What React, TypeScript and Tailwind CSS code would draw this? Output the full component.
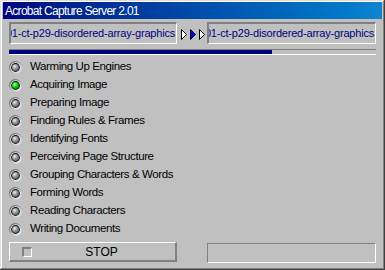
import React from 'react';

const steps = [
    'Warming Up Engines',
    'Acquiring Image',
    'Preparing Image',
    'Finding Rules & Frames',
    'Identifying Fonts',
    'Perceiving Page Structure',
    'Grouping Characters & Words',
    'Forming Words',
    'Reading Characters',
    'Writing Documents',
];

const Led: React.FC<{ on?: boolean; id: string }> = ({on, id}) => (
    <svg width="13" height="13" viewBox="0 0 13 13">
        <defs>
            <linearGradient id={`bezel-${id}`} x1="0" y1="0" x2="1" y2="1">
                <stop offset="0" stopColor="#4a4a4a"/>
                <stop offset="1" stopColor="#ffffff"/>
            </linearGradient>
            <radialGradient id={`ball-${id}`} cx="0.38" cy="0.35" r="0.7">
                {on ? (
                    <>
                        <stop offset="0" stopColor="#d0ffd0"/>
                        <stop offset="0.35" stopColor="#20f020"/>
                        <stop offset="1" stopColor="#008000"/>
                    </>
                ) : (
                    <>
                        <stop offset="0" stopColor="#f4f4f4"/>
                        <stop offset="0.4" stopColor="#a8a8a8"/>
                        <stop offset="1" stopColor="#585858"/>
                    </>
                )}
            </radialGradient>
        </defs>
        <circle cx="6.5" cy="6.5" r="6.5" fill={`url(#bezel-${id})`}/>
        <circle cx="6.5" cy="6.5" r="5.2" fill="#e8e8e8"/>
        <circle cx="6.5" cy="6.5" r="4.4" fill="#111111"/>
        <circle cx="6.5" cy="6.5" r="3.5" fill={`url(#ball-${id})`}/>
    </svg>
);

const Field: React.FC<{ text: string; className?: string }> = ({text, className}) => (
    <div
        className={"h-[22px] flex items-center justify-end overflow-hidden bg-[#c0c0c0] border-t-2 border-l-2 border-[#808080] border-b border-r border-b-white border-r-white pr-[1px] " + (className ?? '')}>
        <span className="whitespace-nowrap text-[11px] tracking-[-0.2px] text-[#000080]">{text}</span>
    </div>
);

export default function App() {
    return (
        <div
            className="w-[385px] h-[270px] bg-[#c0c0c0] px-[3px] pt-[2px] flex flex-col shadow-[inset_-1px_-1px_#404040,inset_1px_1px_#dfdfdf,inset_-2px_-2px_#808080,inset_2px_2px_#ffffff]"
            style={{fontFamily: '"Liberation Sans", Arial, sans-serif'}}>
            <div className="h-[17px] flex items-center pl-[2px] bg-linear-to-r from-[#000080] to-[#1084d0]">
                <span className="text-white text-[12px] tracking-[-0.7px]">Acrobat Capture Server 2.01</span>
            </div>

            <div className="px-[6px] flex flex-col">
                <div className="mt-[3px] flex">
                    <Field text="0001-ct-p29-disordered-array-graphics" className="w-[168px]"/>
                    <svg width="30" height="22" viewBox="0 0 30 22" className="shrink-0">
                        <path d="M4.5 7.5 L9.5 12.5 L4.5 17.5 Z" fill="#ffffff" stroke="#000" strokeWidth="1"/>
                        <path d="M13.5 7.5 L18.5 12.5 L13.5 17.5 Z" fill="#0000ff" stroke="#000" strokeWidth="1"/>
                        <path d="M22.5 7.5 L27.5 12.5 L22.5 17.5 Z" fill="#ffffff" stroke="#000" strokeWidth="1"/>
                    </svg>
                    <Field text="0001-ct-p29-disordered-array-graphics" className="flex-1"/>
                </div>

                <div className="mt-[5px] h-[6px] border-t border-[#808080] border-b border-b-white">
                    <div className="h-full w-[263px] bg-[#000080]"/>
                </div>

                <div className="mt-[3px] flex flex-col">
                    {steps.map((s, i) => (
                        <div key={s} className="h-[18px] flex items-center gap-[8px]">
                            <Led on={i === 1} id={String(i)}/>
                            <span className="text-[11.5px] tracking-[-0.4px] text-black">{s}</span>
                        </div>
                    ))}
                </div>

                <div className="mt-[4px] flex">
                    <div
                        className="w-[168px] h-[20px] flex items-center border-t border-l border-white border-b-2 border-r-2 border-b-[#808080] border-r-[#808080] pl-[12px]">
                        <div
                            className="w-[10px] h-[10px] border-t-2 border-l-2 border-[#808080] border-b border-r border-b-white border-r-white"/>
                        <span className="flex-1 text-center text-[12px] pr-[4px] text-black">STOP</span>
                    </div>
                    <div className="w-[30px]"/>
                    <div
                        className="flex-1 mt-[1px] h-[20px] border-t border-l border-[#808080] border-b border-r border-b-white border-r-white"/>
                </div>
            </div>
        </div>
    );
}
